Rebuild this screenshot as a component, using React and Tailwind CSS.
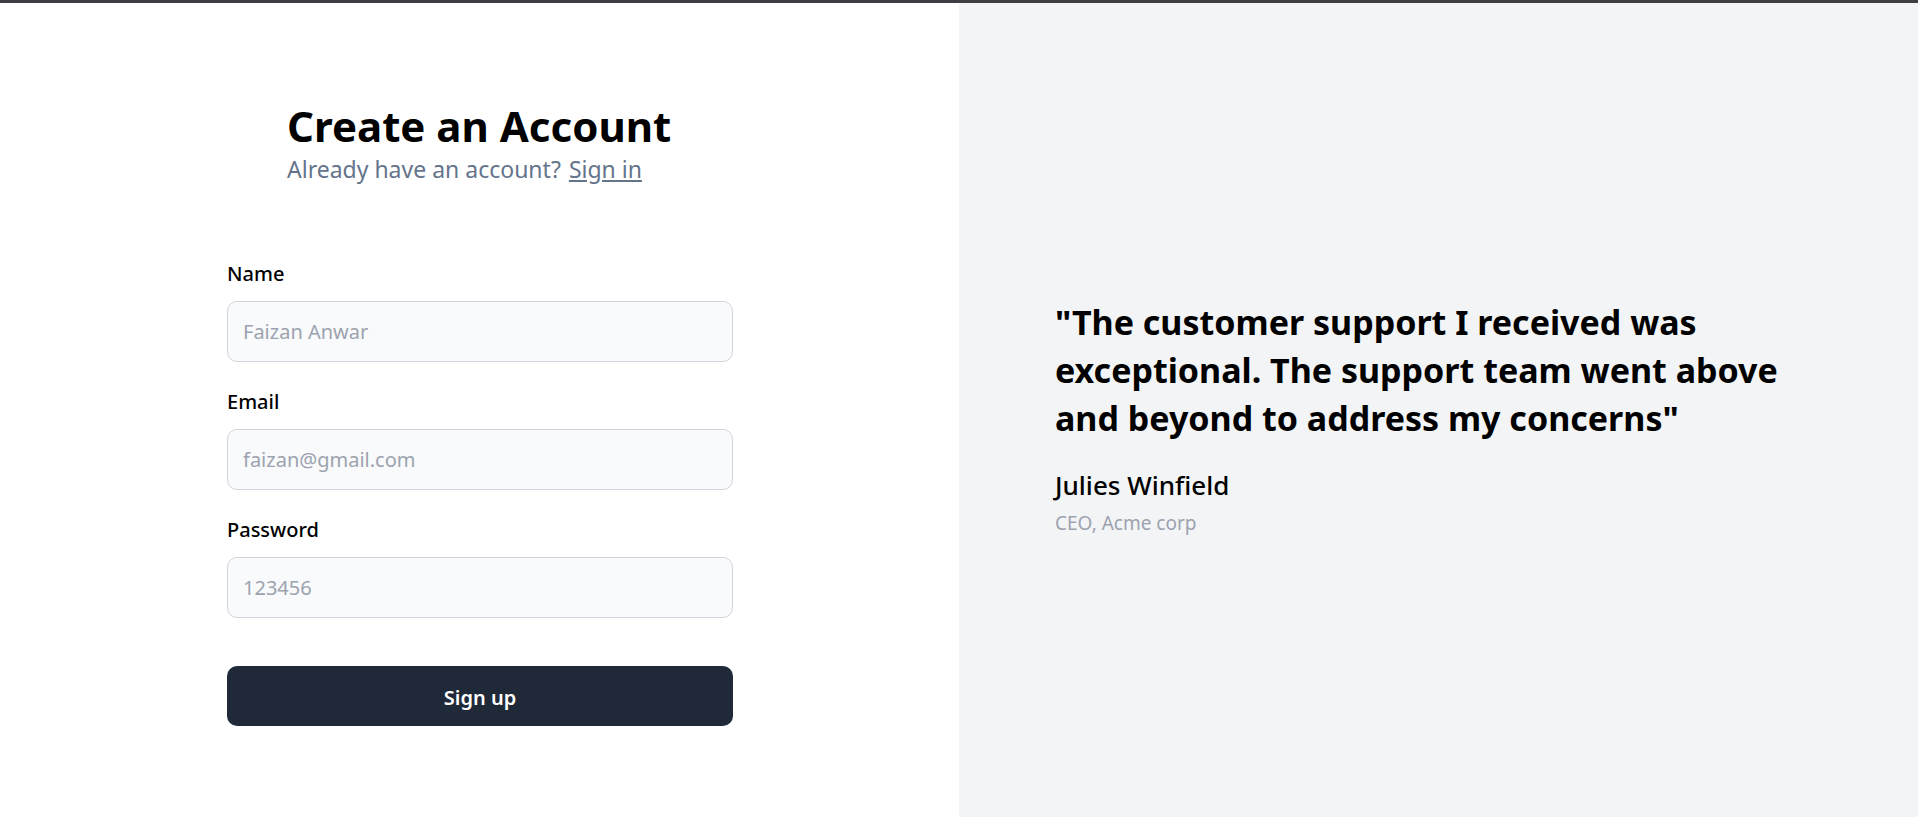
const FIELDS = [
  { label: 'Name', type: 'text', placeholder: 'Faizan Anwar' },
  { label: 'Email', type: 'email', placeholder: 'faizan@gmail.com' },
  { label: 'Password', type: 'password', placeholder: '123456' },
]

function Field({ label, type, placeholder }) {
  return (
    <div className="flex flex-col">
      <label className="text-[20px] leading-[30px] font-medium text-black mb-[12px]">{label}</label>
      <input type={type} placeholder={placeholder}
        className="h-[61px] w-full rounded-[10px] border border-[#d1d5db] bg-[#f9fafb] px-[15px] text-[20px] text-black placeholder:text-[#9ca3af] outline-none" />
    </div>
  )
}

export default function App() {
  return (
    <div className="h-screen flex flex-col bg-white text-black"
      style={{ fontFamily: '"Noto Sans", "Open Sans", sans-serif' }}>
      <div className="h-[3px] shrink-0 bg-[#3d3d42]" />
      <div className="flex-1 grid grid-cols-2">
        {/* Sign up form */}
        <div className="pt-[99px] pl-[227px]">
          <div className="ml-[60px]">
            <h1 className="text-[42px] leading-[48px] font-bold">Create an Account</h1>
            <p className="mt-[5px] text-[23px] leading-[28px] text-[#64748b]">
              Already have an account?
              <a href="#" className="ml-[8px] underline">Sign in</a>
            </p>
          </div>

          <form className="w-[506px] mt-[76px] flex flex-col gap-[25px]" onSubmit={e => e.preventDefault()}>
            {FIELDS.map(f => <Field key={f.label} {...f} />)}
            <button type="submit"
              className="mt-[23px] h-[60px] w-full rounded-[10px] bg-[#1f2937] pt-[4px] text-white text-[20px] font-semibold">
              Sign up
            </button>
          </form>
        </div>

        {/* Testimonial */}
        <div className="bg-[#f3f4f6] pt-[295px] pl-[96px]">
          <div className="w-[760px]">
            <p className="text-[34px] leading-[48px] font-bold">
              "The customer support I received was exceptional. The support team went above and beyond to address my concerns"
            </p>
            <p className="mt-[27px] text-[26px] leading-[32px] font-medium">Julies Winfield</p>
            <p className="mt-[10px] text-[19px] leading-[24px] text-[#9ca3af]">CEO, Acme corp</p>
          </div>
        </div>
      </div>
    </div>
  )
}
